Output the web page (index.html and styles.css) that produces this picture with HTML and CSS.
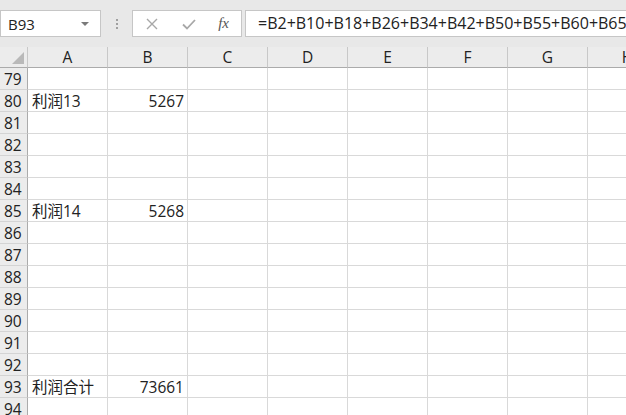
FILE: index.html
```html
<!DOCTYPE html>
<html lang="zh-CN">
<head>
    <meta charset="UTF-8">
    <title>Excel</title>
    <link rel="stylesheet" href="styles.css">
</head>
<body>
    <div class="toolbar">
        <div class="namebox">
            <span>B93</span>
            <svg class="caret" width="10" height="6" viewBox="0 0 10 6"><path d="M1 1h8L5 5z" fill="#7a7a7a"/></svg>
        </div>
        <div class="dots"><i></i><i></i><i></i></div>
        <div class="fxbox">
            <svg width="14" height="14" viewBox="0 0 14 14"><path d="M2 2l10 10M12 2L2 12" stroke="#a8a8a8" stroke-width="1.4"/></svg>
            <svg width="16" height="14" viewBox="0 0 16 14"><path d="M2 7.5l4 4L14 3" stroke="#a8a8a8" stroke-width="1.8" fill="none"/></svg>
            <span class="fx">fx</span>
        </div>
        <div class="formula">=B2+B10+B18+B26+B34+B42+B50+B55+B60+B65+B70+B75+B80+B85</div>
    </div>
    <div class="sheet" id="sheet">
        <div class="corner"><span class="tri"></span></div>
        <div class="colhead">A</div>
        <div class="colhead">B</div>
        <div class="colhead">C</div>
        <div class="colhead">D</div>
        <div class="colhead">E</div>
        <div class="colhead">F</div>
        <div class="colhead">G</div>
        <div class="colhead">H</div>
    </div>
    <script>
        const data = { 80: ['利润13', '5267'], 85: ['利润14', '5268'], 93: ['利润合计', '73661'] };
        const sheet = document.getElementById('sheet');
        for (let r = 79; r <= 94; r++) {
            let html = '<div class="rowhead">' + r + '</div>';
            const vals = data[r] || ['', ''];
            html += '<div class="cell">' + vals[0] + '</div>';
            html += '<div class="cell num">' + vals[1] + '</div>';
            for (let c = 0; c < 6; c++) html += '<div class="cell"></div>';
            sheet.insertAdjacentHTML('beforeend', html);
        }
    </script>
</body>
</html>
```

FILE: styles.css
```css
body {
    margin: 0;
    width: 626px;
    height: 415px;
    overflow: hidden;
    background: #fff;
    font-family: "Segoe UI", "Open Sans", "Noto Sans CJK SC", sans-serif;
    color: #222;
}
.toolbar {
    height: 47px;
    box-sizing: border-box;
    padding-top: 10px;
    background: #e8e8e8;
    display: flex;
    align-items: flex-start;
    white-space: nowrap;
}
.namebox {
    width: 101px;
    height: 27px;
    box-sizing: border-box;
    border: 1px solid #c6c6c6;
    background: #fff;
    display: flex;
    align-items: center;
    justify-content: space-between;
    padding: 0 10px 0 7px;
    font-size: 15px;
}
.dots {
    width: 31px;
    height: 27px;
    display: flex;
    flex-direction: column;
    align-items: center;
    justify-content: center;
    gap: 2px;
}
.dots i {
    width: 2px;
    height: 2px;
    background: #a0a0a0;
}
.fxbox {
    width: 110px;
    height: 27px;
    box-sizing: border-box;
    border: 1px solid #c6c6c6;
    background: #fff;
    display: flex;
    align-items: center;
    justify-content: space-between;
    padding: 0 12px 0 12px;
}
.fx {
    font-family: "Liberation Serif", serif;
    font-style: italic;
    font-size: 15px;
    color: #555;
}
.formula {
    flex: 1;
    margin-left: 3px;
    height: 27px;
    box-sizing: border-box;
    border: 1px solid #c6c6c6;
    border-right: none;
    background: #fff;
    padding-left: 12px;
    font-size: 16px;
    line-height: 25px;
    overflow: hidden;
}
.sheet {
    display: grid;
    grid-template-columns: 28px repeat(8, 80px);
    grid-template-rows: 21px;
    grid-auto-rows: 22px;
    font-size: 15.5px;
}
.corner {
    background: #ececec;
    border-right: 1px solid #c8c8c8;
    border-bottom: 1px solid #ababab;
    position: relative;
}
.tri {
    position: absolute;
    right: 3px;
    bottom: 3px;
    width: 0;
    height: 0;
    border-left: 12px solid transparent;
    border-bottom: 12px solid #b9b9b9;
}
.colhead {
    background: #ececec;
    border-right: 1px solid #c8c8c8;
    border-bottom: 1px solid #ababab;
    display: flex;
    align-items: center;
    justify-content: center;
    color: #222;
}
.rowhead {
    background: #ececec;
    border-right: 1px solid #ababab;
    border-bottom: 1px solid #d4d4d4;
    display: flex;
    align-items: center;
    padding-left: 4px;
}
.cell {
    border-right: 1px solid #d9d9d9;
    border-bottom: 1px solid #d9d9d9;
    padding: 0 3px 0 4px;
    display: flex;
    align-items: center;
    white-space: nowrap;
}
.num {
    justify-content: flex-end;
}
```
